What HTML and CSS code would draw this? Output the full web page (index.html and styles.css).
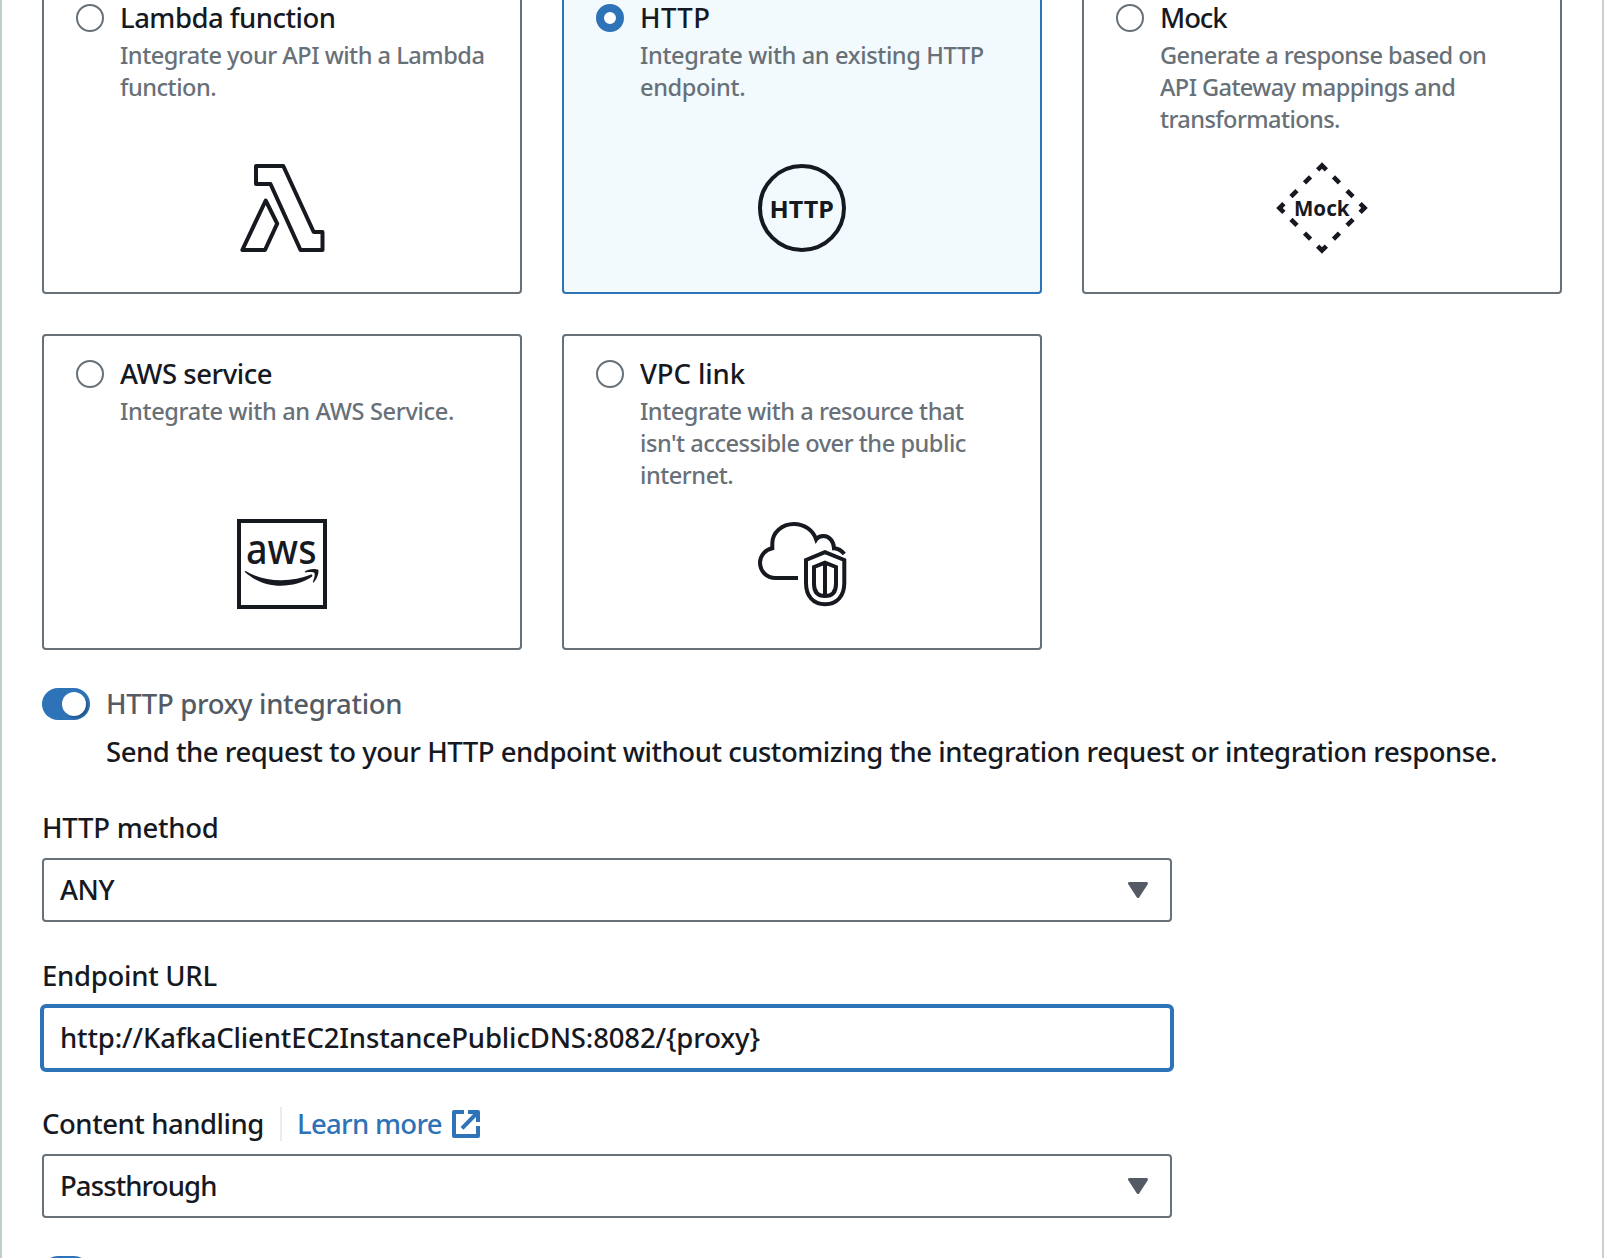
FILE: index.html
```
<!DOCTYPE html>
<html lang="en">
<head>
<meta charset="utf-8">
<title>Create method</title>
<link rel="stylesheet" href="styles.css">
</head>
<body>
<main class="panel">
  <section class="tiles">
    <div class="tile">
      <div class="tile-head">
        <span class="radio"></span>
        <div>
          <div class="tile-title t-lambda">Lambda function</div>
          <p class="tile-desc d-lambda">Integrate your API with a Lambda<br>function.</p>
        </div>
      </div>
      <svg class="tile-icon" viewBox="0 0 96 96">
        <g fill="none" stroke="#16191f" stroke-width="4" stroke-linejoin="round">
          <path d="M22 6H49.3L79.7 72H88.5V90H66.5L36.5 24H22Z"/>
          <path d="M31.7 40.5L43.2 63.7L31 90H8.3Z"/>
        </g>
      </svg>
    </div>
    <div class="tile selected">
      <div class="tile-head">
        <span class="radio checked"></span>
        <div>
          <div class="tile-title t-http">HTTP</div>
          <p class="tile-desc d-http">Integrate with an existing HTTP<br>endpoint.</p>
        </div>
      </div>
      <svg class="tile-icon" viewBox="0 0 96 96">
        <circle cx="48" cy="48" r="42" fill="none" stroke="#16191f" stroke-width="4"/>
        <text class="icon-text" x="15.5" y="58" font-size="24" textLength="64.5" lengthAdjust="spacingAndGlyphs">HTTP</text>
      </svg>
    </div>
    <div class="tile">
      <div class="tile-head">
        <span class="radio"></span>
        <div>
          <div class="tile-title t-mock">Mock</div>
          <p class="tile-desc d-mock">Generate a response based on<br>API Gateway mappings and<br>transformations.</p>
        </div>
      </div>
      <svg class="tile-icon" viewBox="0 0 96 96">
        <path d="M48 5.5L90.5 48L48 90.5L5.5 48Z" fill="none" stroke="#16191f" stroke-width="4.6" stroke-dasharray="6.2 10 8.5 10.7 8.5 10 6.2 0"/>
        <text class="icon-text" x="20" y="56" font-size="21" textLength="55.5" lengthAdjust="spacingAndGlyphs">Mock</text>
      </svg>
    </div>
    <div class="tile">
      <div class="tile-head">
        <span class="radio"></span>
        <div>
          <div class="tile-title">AWS service</div>
          <p class="tile-desc d-aws">Integrate with an AWS Service.</p>
        </div>
      </div>
      <svg class="tile-icon" viewBox="0 0 96 96">
        <rect x="5" y="5" width="86" height="86" fill="none" stroke="#16191f" stroke-width="4"/>
        <text class="icon-text aws" x="12" y="48" font-size="41" textLength="70.5" lengthAdjust="spacingAndGlyphs">aws</text>
        <path fill="#16191f" d="M11.5 55C23 62 36 64.5 47.5 64.3C58 64.2 68 62 76.5 58.8C78.5 58 79 60 77.5 61C69 66.5 58 69.7 47 69.7C33 69.7 21 65 11.2 56.3C10.4 55.4 11 54.7 11.5 55Z"/>
        <path fill="#16191f" d="M71 55.5C73 53 81 52.2 84 53.6C85.5 55 83.5 63.5 79.6 66.4C79 66.8 78.6 66.3 79 65.5C80 63 81.3 58.6 80.4 57C79.5 55.6 74 56.2 71.5 56.4C70.8 56.5 70.5 56 71 55.5Z"/>
      </svg>
    </div>
    <div class="tile">
      <div class="tile-head">
        <span class="radio"></span>
        <div>
          <div class="tile-title t-vpc">VPC link</div>
          <p class="tile-desc d-vpc">Integrate with a resource that<br>isn't accessible over the public<br>internet.</p>
        </div>
      </div>
      <svg class="tile-icon" viewBox="0 0 96 96">
        <g fill="none" stroke="#16191f" stroke-width="4">
          <path d="M44 62H21.5C12.5 62 6 55 6 46.8C6 39.5 11.5 33.5 18.3 32.3V28C18 16.5 28 8 40 8C50 8 59 14 62.2 23.5C63.8 21 66.5 20 69.5 20C75.5 20 79.8 25.5 80 32.3C84.5 32.6 87.5 34.5 90.3 38"/>
          <path d="M71 36.2L52 44V67C52 80 59 88.3 71.2 88.3C83 88.3 90.3 80 90.3 67V44Z"/>
          <path d="M71 46.6L60 51V68C60 76 64 80 71 80C78 80 82 76 82 68V51ZM71 46.6V80"/>
        </g>
      </svg>
    </div>
  </section>

  <section class="toggle-row">
    <span class="toggle"></span>
    <div>
      <div class="toggle-label">HTTP proxy integration</div>
      <p class="toggle-desc">Send the request to your HTTP endpoint without customizing the integration request or integration response.</p>
    </div>
  </section>

  <section class="field">
    <div class="label l-method">HTTP method</div>
    <div class="control">
      <span class="v-any">ANY</span>
      <svg class="caret" viewBox="0 0 20 16"><path d="M1.5 1.5H18.5L10 14.5Z"/></svg>
    </div>
  </section>

  <section class="field">
    <div class="label l-url">Endpoint URL</div>
    <div class="control focused"><span class="v-url">http://KafkaClientEC2InstancePublicDNS:8082/{proxy}</span></div>
  </section>

  <section class="field">
    <div class="label">
      <span>Content handling</span>
      <a class="info">Learn more
        <svg class="external" viewBox="0 0 28 28"><path d="M12 2H2V26H26V16M16 2H26V12M10 18.3L26 2"/></svg>
      </a>
    </div>
    <div class="control">
      <span class="v-pass">Passthrough</span>
      <svg class="caret" viewBox="0 0 20 16"><path d="M1.5 1.5H18.5L10 14.5Z"/></svg>
    </div>
  </section>

  <section class="toggle-row">
    <span class="toggle"></span>
  </section>
</main>
</body>
</html>
```
FILE: styles.css
```
* { box-sizing: border-box; }

body {
  margin: 0;
  height: 1258px;
  overflow: hidden;
  background: #fff;
  color: #16191f;
  font: 500 27.5px/44px "Noto Sans", sans-serif;
  letter-spacing: -0.45px;
}

p { margin: 0; }

.panel {
  height: 1258px;
  overflow: hidden;
  padding: 0 40px;
  border-left: 2px solid #c3cccc;
  border-right: 2px solid #c9d0d3;
  display: flex;
  flex-direction: column;
  gap: 32px;
}

.panel > * { flex: none; }

/* The tile grid is scrolled partly past the top edge */
.tiles {
  display: grid;
  grid-template-columns: repeat(3, 480px);
  grid-auto-rows: 316px;
  gap: 40px;
  margin-top: -22px;
}

.tile {
  display: flex;
  flex-direction: column;
  justify-content: space-between;
  padding: 16px 32px 36px;
  border: 2px solid #687078;
  border-radius: 4px;
}

.tile.selected {
  border-color: #2e73b8;
  background: #f2fafd;
}

.tile-head { display: flex; gap: 16px; }

.radio {
  flex: none;
  width: 28px;
  height: 28px;
  margin-top: 8px;
  border: 2px solid #687078;
  border-radius: 50%;
  background: #fff;
}

.radio.checked { border: 8px solid #2e73b8; }

.tile-title { white-space: nowrap; }
.t-lambda { letter-spacing: -0.52px; }
.t-http { letter-spacing: 0.4px; }
.t-mock { letter-spacing: -1.1px; }
.t-vpc { letter-spacing: -0.1px; }

.tile-desc {
  margin-top: -1px;
  color: #687078;
  font-size: 23.6px;
  line-height: 32px;
  white-space: nowrap;
}

.d-lambda { letter-spacing: -0.5px; }
.d-http { letter-spacing: -0.38px; }
.d-mock { letter-spacing: -0.6px; }
.d-aws { letter-spacing: -0.35px; }
.d-vpc { letter-spacing: -0.48px; }

.tile-icon {
  width: 96px;
  height: 96px;
  align-self: center;
}

.icon-text {
  font-family: "Noto Sans", sans-serif;
  font-weight: 700;
  letter-spacing: 0;
  fill: #16191f;
}

.icon-text.aws { font-weight: 500; }

.toggle-row { display: flex; gap: 16px; }

.toggle {
  flex: none;
  width: 48px;
  height: 32px;
  margin-top: 6px;
  padding: 4px;
  border-radius: 16px;
  background: #2e73b8;
  display: flex;
  justify-content: flex-end;
}

.toggle::after {
  content: "";
  width: 24px;
  height: 24px;
  border-radius: 50%;
  background: #fff;
  box-shadow: 2px 2px 2px rgba(0, 0, 0, 0.25);
}

.toggle-label {
  color: #545b64;
  letter-spacing: -0.35px;
}

.toggle-desc {
  margin-top: 4px;
  letter-spacing: -0.47px;
  white-space: nowrap;
}

.field { width: 1130px; }

.label {
  display: flex;
  align-items: center;
  margin-bottom: 8px;
}

.l-method { letter-spacing: -0.25px; }
.l-url { letter-spacing: -0.28px; }

.info {
  display: flex;
  align-items: center;
  height: 34px;
  margin-left: 16px;
  padding-left: 15px;
  border-left: 2px solid #eaeded;
  color: #2e73b8;
  letter-spacing: -0.7px;
}

.external {
  width: 28px;
  height: 28px;
  margin-left: 10px;
  fill: none;
  stroke: #2e73b8;
  stroke-width: 4;
  stroke-linejoin: round;
}

.control {
  display: flex;
  align-items: center;
  justify-content: space-between;
  height: 64px;
  padding: 0 22px 0 16px;
  border: 2px solid #687078;
  border-radius: 4px;
}

/* The focus border grows 2px outwards without shifting the value */
.control.focused {
  height: 68px;
  margin: -2px;
  border: 4px solid #2e73b8;
  border-radius: 6px;
}

.v-url { letter-spacing: -0.15px; }
.v-pass { letter-spacing: -0.9px; }

.caret { width: 20px; height: 16px; }

.caret path {
  fill: #545b64;
  stroke: #545b64;
  stroke-width: 3;
  stroke-linejoin: round;
}
```
